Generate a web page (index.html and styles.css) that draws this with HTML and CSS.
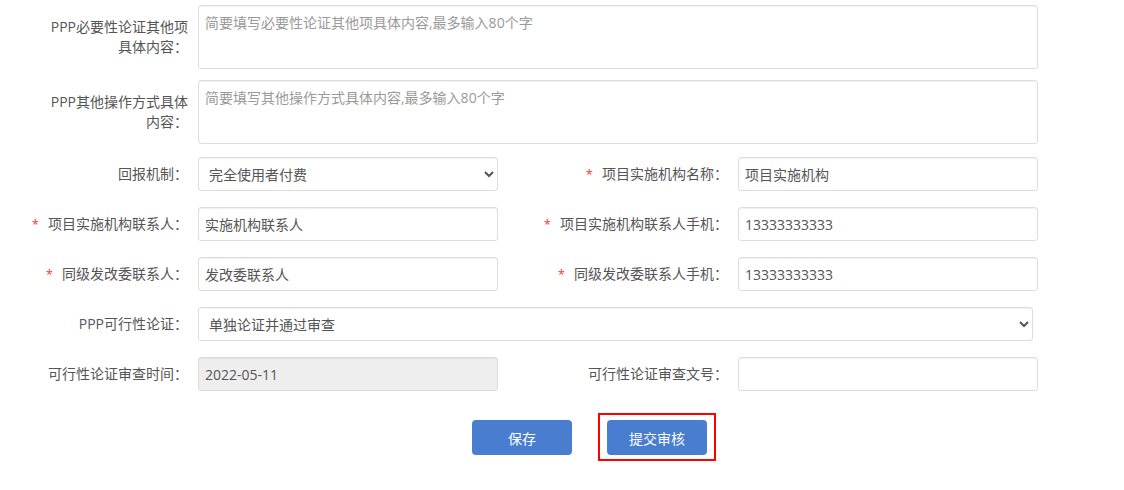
FILE: index.html
```html
<!DOCTYPE html>
<html lang="zh-CN">
<head>
<meta charset="utf-8">
<title>PPP</title>
<link rel="stylesheet" href="styles.css">
</head>
<body>
<form class="form">
  <div class="row row-ta">
    <label class="lbl lbl-wrap">PPP必要性论证其他项具体内容：</label>
    <textarea class="ctl ta" placeholder="简要填写必要性论证其他项具体内容,最多输入80个字"></textarea>
  </div>
  <div class="row row-ta row-ta2">
    <label class="lbl lbl-wrap">PPP其他操作方式具体内容：</label>
    <textarea class="ctl ta" placeholder="简要填写其他操作方式具体内容,最多输入80个字"></textarea>
  </div>
  <div class="row">
    <div class="field">
      <label class="lbl">回报机制：</label>
      <select class="ctl sel"><option>完全使用者付费</option></select>
    </div>
    <div class="field">
      <label class="lbl"><span class="req">*</span>项目实施机构名称：</label>
      <input class="ctl" type="text" value="项目实施机构">
    </div>
  </div>
  <div class="row">
    <div class="field">
      <label class="lbl"><span class="req">*</span>项目实施机构联系人：</label>
      <input class="ctl" type="text" value="实施机构联系人">
    </div>
    <div class="field">
      <label class="lbl"><span class="req">*</span>项目实施机构联系人手机：</label>
      <input class="ctl" type="text" value="13333333333">
    </div>
  </div>
  <div class="row">
    <div class="field">
      <label class="lbl"><span class="req">*</span>同级发改委联系人：</label>
      <input class="ctl" type="text" value="发改委联系人">
    </div>
    <div class="field">
      <label class="lbl"><span class="req">*</span>同级发改委联系人手机：</label>
      <input class="ctl" type="text" value="13333333333">
    </div>
  </div>
  <div class="row">
    <div class="field field-full">
      <label class="lbl">PPP可行性论证：</label>
      <select class="ctl sel sel-wide"><option>单独论证并通过审查</option></select>
    </div>
  </div>
  <div class="row">
    <div class="field">
      <label class="lbl">可行性论证审查时间：</label>
      <input class="ctl ctl-disabled" type="text" value="2022-05-11" readonly>
    </div>
    <div class="field">
      <label class="lbl">可行性论证审查文号：</label>
      <input class="ctl" type="text" value="">
    </div>
  </div>
  <div class="actions">
    <button type="button" class="btn">保存</button>
    <span class="mark"><button type="button" class="btn">提交审核</button></span>
  </div>
</form>
</body>
</html>
```
FILE: styles.css
```css
html, body {
  margin: 0;
  padding: 0;
  background: #fff;
}
body {
  font-family: "Open Sans", "Noto Sans CJK SC", sans-serif;
  font-size: 14px;
  color: #555;
}
.form {
  padding-top: 5px;
  padding-bottom: 35px;
}
.row {
  display: flex;
  align-items: center;
  margin-bottom: 16px;
}
.row-ta {
  align-items: flex-start;
  margin-bottom: 11px;
}
.row-ta2 {
  margin-bottom: 13px;
}
.field {
  display: flex;
  align-items: center;
  width: 540px;
}
.field-full {
  width: auto;
}
.lbl {
  box-sizing: border-box;
  width: 188px;
  margin-right: 10px;
  text-align: right;
  line-height: 20px;
  color: #555;
  white-space: nowrap;
}
.lbl-wrap {
  white-space: normal;
  padding-left: 43px;
  padding-top: 12px;
}
.req {
  color: #f33;
  margin-right: 9px;
  font-size: 13px;
}
.ctl {
  box-sizing: border-box;
  width: 300px;
  height: 34px;
  margin: 0;
  padding: 0 6px;
  border: 1px solid #ddd;
  border-radius: 3px;
  background: #fff;
  box-shadow: inset 0 1px 1px rgba(0, 0, 0, 0.06);
  font-family: "Open Sans", "Noto Sans CJK SC", sans-serif;
  font-size: 14px;
  color: #555;
  outline: none;
}
.ta {
  width: 840px;
  height: 64px;
  padding: 7px 6px;
  line-height: 20px;
  resize: none;
}
.ta::placeholder {
  color: #9a9a9a;
}
.sel {
  padding: 0 6px;
}
.sel-wide {
  width: 835px;
}
.ctl-disabled {
  background: #eee;
}
.actions {
  display: flex;
  gap: 35px;
  padding-left: 472px;
  padding-top: 13px;
}
.btn {
  display: block;
  width: 100px;
  height: 35px;
  border: none;
  border-radius: 4px;
  background: #487dcf;
  color: #fff;
  font-family: "Open Sans", "Noto Sans CJK SC", sans-serif;
  font-size: 14px;
  padding: 0;
}
.mark {
  position: relative;
  display: block;
}
.mark::after {
  content: "";
  position: absolute;
  top: -7px;
  bottom: -6px;
  left: -9px;
  right: -9px;
  border: 2px solid #f00;
  pointer-events: none;
}
```
